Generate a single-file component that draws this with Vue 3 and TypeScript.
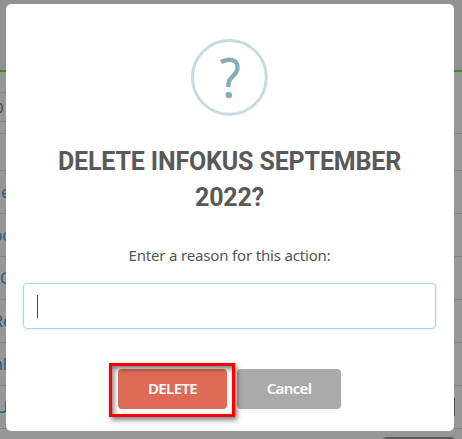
<script setup lang="ts">
import { ref } from 'vue'

interface Row {
  text: string
  end: number
}

const reason = ref('')
const rows: Row[] = [
  { text: 'e', end: 10 },
  { text: 'oo', end: 12 },
  { text: 'C', end: 10 },
  { text: 'Re', end: 12 },
  { text: 'al', end: 7 },
  { text: 'U', end: 8 },
]
</script>

<template>
  <div class="page">
    <div class="backdrop" aria-hidden="true">
      <div class="topbar"></div>
      <div class="filter"><span>0</span></div>
      <div class="strip"></div>
      <div class="table-head"></div>
      <div v-for="(row, i) in rows" :key="i" class="row">
        <span class="clip" :style="{ width: row.end + 'px' }">{{ row.text }}</span>
        <i v-if="i === 5" class="handle"></i>
      </div>
      <div class="footer"><div class="footer-button"></div></div>
    </div>

    <section class="modal" role="dialog">
      <div class="icon">
        <svg width="78" height="78" viewBox="0 0 78 78">
          <circle cx="39.4" cy="39.4" r="36.9" fill="none" stroke="#c9dae1" stroke-width="3" />
          <path d="M31 24.2C33.6 22.6 36.5 21.8 39.6 21.8C44.8 21.8 47.6 24.6 47.6 29C47.6 33.4 45.4 36 42.3 38.9C39.3 41.8 38.2 43.6 38.2 49" fill="none" stroke="#87adbd" stroke-width="4.4" />
          <circle cx="38.8" cy="57" r="3.2" fill="#87adbd" />
        </svg>
      </div>
      <h2><span class="line">DELETE INFOKUS SEPTEMBER</span><span class="line">2022?</span></h2>
      <p>Enter a reason for this action:</p>
      <div class="field"><i v-if="!reason" class="caret"></i>{{ reason }}</div>
      <div class="actions">
        <div class="marked"><button class="delete">DELETE</button></div>
        <button class="cancel">Cancel</button>
      </div>
    </section>
  </div>
</template>

<style>
body {
  overflow: hidden;
}
</style>

<style scoped>
* {
  box-sizing: border-box;
}
.page {
  position: relative;
  width: 462px;
  height: 439px;
  overflow: hidden;
  background: #979797;
  font-family: "Noto Sans", "Open Sans", sans-serif;
}
.topbar {
  height: 72px;
  background: #909192;
  border-bottom: 2px solid #438820;
}
.filter {
  height: 50px;
  padding-top: 20px;
  background:
    linear-gradient(#838383, #838383) 0 20px / 6px 1px no-repeat,
    linear-gradient(#838383, #838383) 0 49px / 6px 1px no-repeat;
  font-size: 15px;
  line-height: 30px;
  color: #444;
}
.filter span {
  display: block;
  margin-left: -5px;
}
.strip {
  height: 12px;
  border-bottom: 1px solid #828282;
}
.table-head {
  height: 37px;
  border-bottom: 1px solid #828282;
}
.row {
  display: flex;
  justify-content: space-between;
  align-items: center;
  height: 43px;
  border-bottom: 1px solid #828282;
  font-size: 16px;
  color: #285b80;
}
.clip {
  display: flex;
  justify-content: flex-end;
  white-space: nowrap;
}
.handle {
  width: 8px;
  height: 18px;
  border-left: 1px solid #505050;
}
.footer {
  height: 10px;
  padding-top: 8px;
}
.footer-button {
  width: 72px;
  height: 20px;
  margin-left: 383px;
  border-radius: 4px;
  background: #5b5b5b;
}
.modal {
  position: absolute;
  left: 6px;
  top: 4px;
  display: flex;
  flex-direction: column;
  align-items: center;
  width: 448px;
  height: 427px;
  padding: 34px 18px 0 17px;
  border-radius: 5px;
  background: #fff;
}
.icon,
.icon svg {
  display: block;
  width: 78px;
  height: 78px;
}
.icon {
  margin-right: 1px;
}
h2 {
  display: flex;
  flex-direction: column;
  align-items: center;
  margin: 28px 0 0;
  font: 700 25px/36px Roboto, sans-serif;
  letter-spacing: -0.15px;
  color: #595959;
}
.line {
  display: block;
  white-space: nowrap;
}
p {
  margin: 27px 0 0;
  font-size: 15px;
  line-height: 24px;
  letter-spacing: -0.17px;
  color: #545454;
  white-space: nowrap;
}
.field {
  width: 413px;
  height: 46px;
  margin-top: 16px;
  padding: 11px 13px;
  border: 1px solid #a9d7ef;
  border-radius: 4px;
  box-shadow: 0 0 3px #c4e6f5;
}
.caret {
  display: block;
  width: 1px;
  height: 23px;
  background: #444;
}
.actions {
  display: flex;
  align-items: flex-start;
  gap: 2px;
  width: 413px;
  padding-left: 86px;
  margin-top: 34px;
}
.marked {
  position: relative;
  width: 126px;
  height: 54px;
  padding: 6px 0 0 9px;
}
.marked::after {
  content: "";
  position: absolute;
  inset: 0;
  border: 3px solid #fb0006;
  box-shadow: 2px 3px 5px rgba(0, 0, 0, 0.5), inset 2px 3px 5px rgba(0, 0, 0, 0.5);
  z-index: 1;
  pointer-events: none;
}
button {
  display: flex;
  align-items: center;
  justify-content: center;
  height: 40px;
  padding: 0 0 3px;
  border: 0;
  border-radius: 4px;
  color: #fff;
  font: 600 15px/20px "Noto Sans", "Open Sans", sans-serif;
}
.delete {
  width: 109px;
  background: #dd6b55;
  letter-spacing: -0.6px;
}
.cancel {
  width: 104px;
  margin-top: 6px;
  background: #aaa;
  letter-spacing: -0.65px;
}
</style>
